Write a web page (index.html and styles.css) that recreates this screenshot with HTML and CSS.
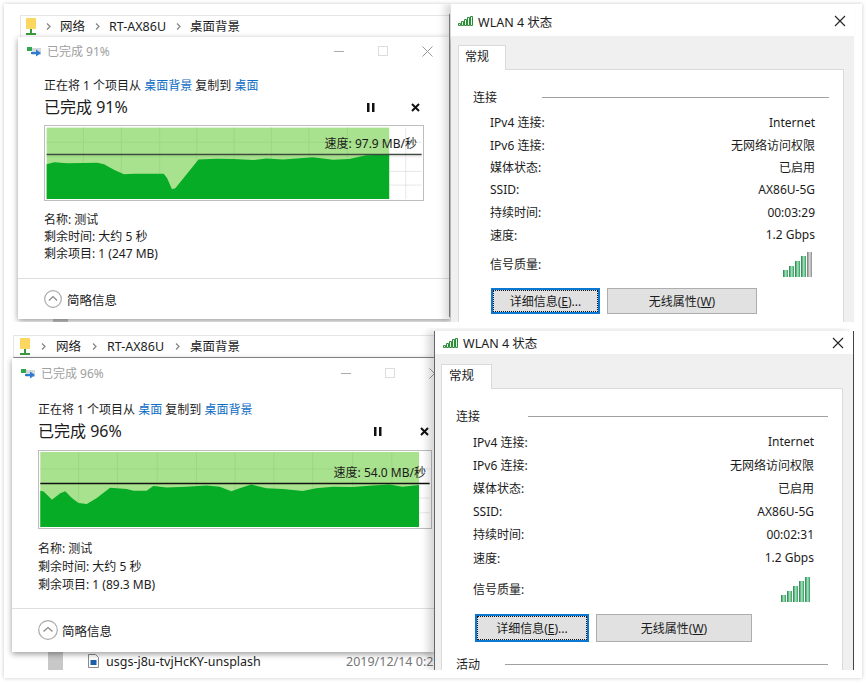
FILE: index.html
```html
<!DOCTYPE html>
<html lang="zh-CN">
<head>
<meta charset="utf-8">
<title>Transfer comparison</title>
<link rel="stylesheet" href="styles.css">
</head>
<body>
<main class="card">

<section class="shot shot-a">
  <div class="bg-block"></div>
  <nav class="crumb">
    <svg class="folder" width="10" height="17" viewBox="0 0 10 17"><rect x="0" y="0" width="10" height="11" rx="1" fill="#fbd75f"/><rect x="4" y="11" width="2" height="4" fill="#3c9a3c"/><rect x="0" y="15" width="10" height="2" fill="#3c9a3c"/></svg>
    <svg class="chev" width="5" height="7" viewBox="0 0 5 7"><path d="M1 0.5L4 3.5L1 6.5" fill="none" stroke="#888" stroke-width="1.3"/></svg>
    <span>网络</span>
    <svg class="chev" width="5" height="7" viewBox="0 0 5 7"><path d="M1 0.5L4 3.5L1 6.5" fill="none" stroke="#888" stroke-width="1.3"/></svg>
    <span>RT-AX86U</span>
    <svg class="chev" width="5" height="7" viewBox="0 0 5 7"><path d="M1 0.5L4 3.5L1 6.5" fill="none" stroke="#888" stroke-width="1.3"/></svg>
    <span>桌面背景</span>
  </nav>

  <div class="dialog">
    <header class="dlg-title">
      <svg class="copy-icon" width="15" height="11" viewBox="0 0 15 11"><rect x="0" y="1" width="5" height="4" fill="#2fa84f"/><rect x="5" y="2" width="9" height="7" fill="#d5d9de"/><path d="M4 6H9V3.5L14 7L9 10.5V8H4Z" fill="#2b7cd3"/></svg>
      <span class="dlg-caption">已完成 91%</span>
      <div class="win-ctrls">
        <span class="win-btn"><svg width="10" height="10" viewBox="0 0 10 10"><path d="M0 5.5H10" stroke="#aaa"/></svg></span>
        <span class="win-btn"><svg width="10" height="10" viewBox="0 0 10 10"><rect x="0.5" y="0.5" width="9" height="9" fill="none" stroke="#ddd"/></svg></span>
        <span class="win-btn"><svg width="11" height="11" viewBox="0 0 11 11"><path d="M0.5 0.5L10.5 10.5M10.5 0.5L0.5 10.5" stroke="#999"/></svg></span>
      </div>
    </header>
    <div class="dlg-body">
      <p class="copy-line">正在将 1 个项目从 <a class="link">桌面背景</a> 复制到 <a class="link">桌面</a></p>
      <div class="progress-row">
        <h1 class="progress">已完成 91%</h1>
        <span class="ctl"><svg width="8" height="9" viewBox="0 0 8 9"><path d="M0 0H2.5V9H0ZM5 0H7.500V9H5Z" fill="#111"/></svg></span>
        <span class="ctl"><svg width="9" height="9" viewBox="0 0 9 9"><path d="M1 1L8 8M8 1L1 8" stroke="#111" stroke-width="2"/></svg></span>
      </div>
      <div class="chart">
        <svg class="chart-svg" viewBox="132 30 1140 228" preserveAspectRatio="none">
          <rect x="132" y="30" width="1140" height="228" fill="#fff"/>
          <rect x="137" y="35" width="1033" height="220" fill="#a9e28f"/>
          <path d="M248 35V255M362 35V255M478 35V255M590 35V255M702 35V255M815 35V255M928 35V255M1044 35V255M137 80H1170M137 125H1170" stroke="#96d17c" stroke-width="2"/>
          <path d="M1170 80H1268M1170 125H1268M1170 170H1268M1170 212H1268M1220 35V255" stroke="#dcdcdc" stroke-width="2"/>
          <polygon points="137,148 160,142 200,145 290,143 310,148 340,165 370,179 400,177 490,177 500,190 515,225 525,222 550,190 595,133 650,131 700,132 760,135 800,130 850,133 940,126 1000,134 1050,132 1100,120 1170,118 1170,255 137,255" fill="#06ab26"/>
          <path d="M137 118H1268" stroke="#3c4a3c" stroke-width="5"/>
        </svg>
        <span class="speed">速度: 97.9 MB/秒</span>
      </div>
      <ul class="details">
        <li>名称: 测试</li>
        <li>剩余时间: 大约 5 秒</li>
        <li>剩余项目: 1 (247 MB)</li>
      </ul>
    </div>
    <footer class="dlg-foot">
      <svg width="18" height="18" viewBox="0 0 18 18"><circle cx="9" cy="9" r="8.300" fill="none" stroke="#aaa" stroke-width="1.200"/><path d="M5 10.500L9 6.500L13 10.500" fill="none" stroke="#888" stroke-width="1.200"/></svg>
      <span>简略信息</span>
    </footer>
  </div>

  <div class="wlan">
    <header class="wlan-title">
      <svg width="15" height="10" viewBox="0 0 15 10"><path d="M0.500 7.500h2v2h-2zM3.500 5.500h2v4h-2zM6.500 3.500h2v6h-2zM9.500 1.500h2v8h-2zM12.500 0.500h2v9h-2z" fill="#e5f5e5" stroke="#2e8b3a"/></svg>
      <span>WLAN 4 状态</span>
      <svg class="wlan-close" width="12" height="12" viewBox="0 0 12 12"><path d="M1 1L11 11M11 1L1 11" stroke="#222" stroke-width="1.100"/></svg>
    </header>
    <div class="band">
      <div class="tab">常规</div>
      <div class="panel">
        <div class="group-head"><span class="group-label">连接</span><span class="group-line"></span></div>
        <dl class="rows">
          <div class="row"><dt>IPv4 连接:</dt><dd>Internet</dd></div>
          <div class="row"><dt>IPv6 连接:</dt><dd>无网络访问权限</dd></div>
          <div class="row"><dt>媒体状态:</dt><dd>已启用</dd></div>
          <div class="row"><dt>SSID:</dt><dd>AX86U-5G</dd></div>
          <div class="row"><dt>持续时间:</dt><dd>00:03:29</dd></div>
          <div class="row"><dt>速度:</dt><dd>1.2 Gbps</dd></div>
          <div class="row row-signal"><dt>信号质量:</dt>
            <dd><svg class="signal" width="29" height="25" viewBox="0 0 29 25">
              <defs>
                <linearGradient id="g" x1="0" y1="0" x2="1" y2="0"><stop offset="0" stop-color="#1f7f4a"/><stop offset=".55" stop-color="#a7e6bd"/><stop offset="1" stop-color="#2f9a5c"/></linearGradient>
                <linearGradient id="n" x1="0" y1="0" x2="1" y2="0"><stop offset="0" stop-color="#777"/><stop offset=".55" stop-color="#ddd"/><stop offset="1" stop-color="#888"/></linearGradient>
              </defs>
              <rect x="0" y="18" width="5" height="7" fill="url(#g)"/><rect x="6" y="14" width="5" height="11" fill="url(#g)"/><rect x="12" y="9" width="5" height="16" fill="url(#g)"/><rect x="18" y="4" width="5" height="21" fill="url(#g)"/><rect x="24" y="0" width="5" height="25" fill="url(#n)"/>
            </svg></dd></div>
        </dl>
        <div class="btns">
          <span class="btn btn-focus">详细信息(<u>E</u>)...</span>
          <span class="btn btn-plain">无线属性(<u>W</u>)</span>
        </div>
      </div>
    </div>
  </div>
</section>

<section class="shot shot-b">
  <div class="filerow">
    <span class="file-block"></span>
    <svg class="file-icon" width="11" height="14" viewBox="0 0 11 14"><path d="M0.500 0.500H7.500L10.500 3.500V13.500H0.500Z" fill="#fff" stroke="#8a8a8a"/><rect x="2.500" y="6" width="6" height="5" fill="#1c5fa8"/></svg>
    <span class="file-name">usgs-j8u-tvjHcKY-unsplash</span>
    <span class="file-date">2019/12/14 0:21</span>
  </div>
  <nav class="crumb">
    <svg class="folder" width="10" height="17" viewBox="0 0 10 17"><rect x="0" y="0" width="10" height="11" rx="1" fill="#fbd75f"/><rect x="4" y="11" width="2" height="4" fill="#3c9a3c"/><rect x="0" y="15" width="10" height="2" fill="#3c9a3c"/></svg>
    <svg class="chev" width="5" height="7" viewBox="0 0 5 7"><path d="M1 0.500L4 3.500L1 6.500" fill="none" stroke="#888" stroke-width="1.300"/></svg>
    <span>网络</span>
    <svg class="chev" width="5" height="7" viewBox="0 0 5 7"><path d="M1 0.500L4 3.500L1 6.500" fill="none" stroke="#888" stroke-width="1.300"/></svg>
    <span>RT-AX86U</span>
    <svg class="chev" width="5" height="7" viewBox="0 0 5 7"><path d="M1 0.500L4 3.500L1 6.500" fill="none" stroke="#888" stroke-width="1.300"/></svg>
    <span>桌面背景</span>
  </nav>

  <div class="dialog">
    <header class="dlg-title">
      <svg class="copy-icon" width="15" height="11" viewBox="0 0 15 11"><rect x="0" y="1" width="5" height="4" fill="#2fa84f"/><rect x="5" y="2" width="9" height="7" fill="#d5d9de"/><path d="M4 6H9V3.500L14 7L9 10.500V8H4Z" fill="#2b7cd3"/></svg>
      <span class="dlg-caption">已完成 96%</span>
      <div class="win-ctrls">
        <span class="win-btn"><svg width="10" height="10" viewBox="0 0 10 10"><path d="M0 5.500H10" stroke="#aaa"/></svg></span>
        <span class="win-btn"><svg width="10" height="10" viewBox="0 0 10 10"><rect x="0.500" y="0.500" width="9" height="9" fill="none" stroke="#ddd"/></svg></span>
        <span class="win-btn"><svg width="11" height="11" viewBox="0 0 11 11"><path d="M0.500 0.500L10.500 10.500M10.500 0.500L0.500 10.500" stroke="#999"/></svg></span>
      </div>
    </header>
    <div class="dlg-body">
      <p class="copy-line">正在将 1 个项目从 <a class="link">桌面</a> 复制到 <a class="link">桌面背景</a></p>
      <div class="progress-row">
        <h1 class="progress">已完成 96%</h1>
        <span class="ctl"><svg width="8" height="9" viewBox="0 0 8 9"><path d="M0 0H2.500V9H0ZM5 0H7.500V9H5Z" fill="#111"/></svg></span>
        <span class="ctl"><svg width="9" height="9" viewBox="0 0 9 9"><path d="M1 1L8 8M8 1L1 8" stroke="#111" stroke-width="2"/></svg></span>
      </div>
      <div class="chart">
        <svg class="chart-svg" viewBox="116 0 1180 237" preserveAspectRatio="none">
          <rect x="116" y="0" width="1180" height="237" fill="#fff"/>
          <rect x="120" y="3" width="1140" height="231" fill="#a9e28f"/>
          <path d="M235 3V234M352 3V234M472 3V234M590 3V234M706 3V234M823 3V234M940 3V234M1060 3V234M1178 3V234M120 55H1260" stroke="#96d17c" stroke-width="2"/>
          <path d="M1260 55H1292M1260 145H1292M1260 190H1292" stroke="#dcdcdc" stroke-width="2"/>
          <polygon points="120,122 130,125 155,150 180,130 195,124 215,145 235,160 260,163 290,145 330,113 380,117 400,122 440,122 460,108 500,112 560,110 620,106 660,110 695,124 720,115 755,103 800,115 850,117 910,123 950,115 1000,110 1060,111 1120,106 1170,103 1210,110 1260,105 1260,234 120,234" fill="#06ab26"/>
          <path d="M120 100H1292" stroke="#111" stroke-width="4"/>
        </svg>
        <span class="speed">速度: 54.0 MB/秒</span>
      </div>
      <ul class="details">
        <li>名称: 测试</li>
        <li>剩余时间: 大约 5 秒</li>
        <li>剩余项目: 1 (89.3 MB)</li>
      </ul>
    </div>
    <footer class="dlg-foot">
      <svg width="20" height="20" viewBox="0 0 20 20"><circle cx="10" cy="10" r="9.300" fill="none" stroke="#aaa" stroke-width="1.200"/><path d="M5.500 11.500L10 7.500L14.500 11.500" fill="none" stroke="#888" stroke-width="1.200"/></svg>
      <span>简略信息</span>
    </footer>
  </div>

  <div class="wlan">
    <header class="wlan-title">
      <svg width="15" height="10" viewBox="0 0 15 10"><path d="M0.500 7.500h2v2h-2zM3.500 5.500h2v4h-2zM6.500 3.500h2v6h-2zM9.500 1.500h2v8h-2zM12.500 0.500h2v9h-2z" fill="#e5f5e5" stroke="#2e8b3a"/></svg>
      <span>WLAN 4 状态</span>
      <svg class="wlan-close" width="12" height="12" viewBox="0 0 12 12"><path d="M1 1L11 11M11 1L1 11" stroke="#222" stroke-width="1.100"/></svg>
    </header>
    <div class="band">
      <div class="tab">常规</div>
      <div class="panel">
        <div class="group-head"><span class="group-label">连接</span><span class="group-line"></span></div>
        <dl class="rows">
          <div class="row"><dt>IPv4 连接:</dt><dd>Internet</dd></div>
          <div class="row"><dt>IPv6 连接:</dt><dd>无网络访问权限</dd></div>
          <div class="row"><dt>媒体状态:</dt><dd>已启用</dd></div>
          <div class="row"><dt>SSID:</dt><dd>AX86U-5G</dd></div>
          <div class="row"><dt>持续时间:</dt><dd>00:02:31</dd></div>
          <div class="row"><dt>速度:</dt><dd>1.2 Gbps</dd></div>
          <div class="row row-signal"><dt>信号质量:</dt>
            <dd><svg class="signal" width="29" height="25" viewBox="0 0 29 25">
              <rect x="0" y="18" width="5" height="7" fill="url(#g)"/><rect x="6" y="14" width="5" height="11" fill="url(#g)"/><rect x="12" y="9" width="5" height="16" fill="url(#g)"/><rect x="18" y="4" width="5" height="21" fill="url(#g)"/><rect x="24" y="0" width="5" height="25" fill="url(#g)"/>
            </svg></dd></div>
        </dl>
        <div class="btns">
          <span class="btn btn-focus">详细信息(<u>E</u>)...</span>
          <span class="btn btn-plain">无线属性(<u>W</u>)</span>
        </div>
        <div class="group-head group-next"><span class="group-label">活动</span><span class="group-line"></span></div>
      </div>
    </div>
  </div>
</section>

</main>
</body>
</html>
```
FILE: styles.css
```css
* { box-sizing: border-box; }
html, body { height: 100%; }
body {
  margin: 0;
  padding: 4px;
  overflow: hidden;
  background: #fff;
  color: #1c1c1c;
  font-family: "Noto Sans", "Noto Sans CJK SC", sans-serif;
  font-size: 12px;
}
p, h1, ul, dl, dd { margin: 0; padding: 0; }
ul { list-style: none; }

.card {
  width: 858px;
  height: 674px;
  background: #fff;
  box-shadow: 0 0 4px rgba(0, 0, 0, 0.22);
  display: flex;
  flex-direction: column;
}

.shot { position: relative; overflow: hidden; width: 858px; flex: none; }
.shot-a { height: 318px; }
.shot-b { height: 342px; margin-top: 6px; }

/* windows on the screenshot's desktop */
.crumb, .dialog, .wlan, .filerow, .bg-block { position: absolute; }

.crumb {
  display: flex;
  align-items: center;
  background: #fff;
  border-bottom: 1px solid #8c8c8c;
  border-top: 1px solid #e6e6e6;
  border-left: 1px solid #e6e6e6;
}
.crumb span { font-size: 12.5px; line-height: 16px; white-space: nowrap; }
.shot-a .crumb { left: 16px; top: 11px; width: 430px; height: 23px; padding-left: 5px; gap: 9.500px; }
.shot-b .crumb { left: 9px; top: 7px; width: 421px; height: 23px; padding-left: 6px; gap: 10.500px; }

.bg-block { left: 49px; top: 315px; width: 15px; height: 3px; background: #c8c8c8; }

.dialog {
  display: flex;
  flex-direction: column;
  background: #fff;
  box-shadow: 0 2px 6px rgba(0, 0, 0, 0.4);
}
.shot-a .dialog { left: 14px; top: 33px; width: 432px; height: 282px; }
.shot-b .dialog { left: 8px; top: 30px; width: 422px; height: 294px; }

.dlg-title { display: flex; align-items: center; flex: none; }
.shot-a .dlg-title { height: 28px; padding-left: 9px; }
.shot-b .dlg-title { height: 30px; padding-left: 9px; }
.copy-icon { margin-right: 5px; flex: none; }
.dlg-caption { color: #a0a0a0; font-size: 12px; }
.win-ctrls { display: flex; margin-left: auto; }
.shot-a .win-ctrls { margin-right: 1px; }
.shot-b .win-ctrls { margin-right: -22px; }
.win-btn { width: 44px; display: flex; justify-content: center; align-items: center; }

.dlg-body { padding-left: 26px; flex: none; }
.copy-line { line-height: 18px; white-space: nowrap; }
.shot-a .copy-line { margin-top: 12px; }
.shot-b .copy-line { margin-top: 13px; }
.link { color: #0d6cc4; }

.progress-row { display: flex; align-items: center; height: 24px; }
.progress { font-size: 16px; font-weight: 400; line-height: 24px; margin-right: auto; white-space: nowrap; }
.ctl { display: flex; justify-content: center; align-items: center; }
.shot-a .progress-row { width: 393px; }
.shot-a .ctl { width: 44px; }
.shot-b .progress-row { width: 410px; }
.shot-b .ctl { width: 47px; }

.chart { position: relative; }
.shot-a .chart { width: 380px; height: 76px; margin-top: 6px; }
.shot-b .chart { width: 394px; height: 79px; margin-top: 7px; }
.chart-svg { display: block; width: 100%; height: 100%; border: 1px solid #bdbdbd; }
.speed { position: absolute; font-size: 12px; line-height: 16px; white-space: nowrap; color: #1a1a1a; }
.shot-a .speed { top: 11px; right: 7px; }
.shot-b .speed { top: 15px; right: 6px; }

.shot-a .details { margin-top: 10px; line-height: 17px; }
.shot-b .details { margin-top: 11px; line-height: 18px; }

.dlg-foot {
  display: flex;
  align-items: center;
  gap: 5px;
  padding-left: 26px;
  border-top: 1px solid #dfdfdf;
  flex: none;
  font-size: 12.5px;
}
.shot-a .dlg-foot { margin-top: 16px; height: 41px; gap: 5px; }
.shot-b .dlg-foot { margin-top: 14px; height: 43px; gap: 4px; }

.filerow { left: 44px; top: 324px; height: 18px; width: 386px; display: flex; align-items: center; }
.file-block { width: 15px; height: 18px; background: #c8c8c8; margin-right: 25px; }
.file-icon { margin-right: 7px; }
.file-name { font-size: 12.5px; white-space: nowrap; }
.file-date { margin-left: auto; color: #777; font-size: 12.5px; white-space: nowrap; width: 88px; overflow: hidden; }

.wlan {
  display: flex;
  flex-direction: column;
  background: #fff;
  box-shadow: -6px 0 8px rgba(0, 0, 0, 0.16);
}
.shot-a .wlan { left: 447px; top: 0; width: 403px; height: 318px; }
.shot-b .wlan {
  left: 430px; top: 3px; width: 420px; height: 339px;
  border-left: 1px solid #666;
  border-right: 1px solid #444;
}
.shot-a .wlan::before {
  content: "";
  position: absolute;
  left: -2px; top: 10px; bottom: 5px;
  border-left: 1px solid #777;
}

.wlan-title { display: flex; align-items: center; gap: 5px; flex: none; font-size: 12.5px; padding-left: 7px; padding-right: 8px; }
.shot-a .wlan-title { height: 32px; padding-top: 2px; }
.shot-b .wlan-title { height: 23px; padding-left: 8px; padding-right: 9px; }
.wlan-close { margin-left: auto; flex: none; }

.band { flex: 1; background: #f0f0f0; padding: 9px 10px 0 7px; min-height: 0; overflow: hidden; }
.shot-b .band { padding-top: 10px; padding-left: 6px; }
.tab {
  position: relative;
  z-index: 1;
  width: 48px;
  height: 25px;
  margin-bottom: -1px;
  background: #fff;
  border: 1px solid #dadada;
  border-bottom: 0;
  padding-left: 6px;
  line-height: 22px;
}
.shot-b .tab { width: 51px; padding-left: 7px; font-size: 12.5px; }
.panel { background: #fff; border: 1px solid #dadada; border-bottom: 0; height: 400px; padding: 18px 14px 0; }

.group-head { display: flex; align-items: center; height: 18px; }
.group-label { flex: none; width: 69px; }
.shot-b .group-label { width: 72px; }
.group-line { flex: 1; border-top: 1px solid #a0a0a0; }
.group-next { margin-top: 13px; }
.group-next .group-label { width: 49px; }

.rows { margin-top: 5px; padding: 0 14px 0 17px; }
.row { display: flex; justify-content: space-between; align-items: center; height: 22.500px; }
.shot-b .row { height: 23.200px; }
.row-signal, .shot-b .row-signal { height: 36px; }
.shot-b .row-signal { height: 40px; }
.signal { display: block; margin-right: 3px; }
.shot-b .signal { margin-right: 4px; }

.btns { display: flex; gap: 7px; margin-left: 18px; }
.shot-a .btns { margin-top: 6px; }
.shot-b .btns { margin-top: 5px; margin-left: 19px; }
.btn { display: flex; align-items: center; justify-content: center; background: #e1e1e1; white-space: nowrap; }
.shot-a .btn { height: 26px; }
.shot-b .btn { height: 28px; }
.btn-focus { border: 2px solid #0a78d2; outline: 1px dotted #111; outline-offset: -3px; }
.btn-plain { border: 1px solid #adadad; }
.shot-a .btn-focus { width: 109px; }
.shot-a .btn-plain { width: 150px; }
.shot-b .btn-focus { width: 114px; }
.shot-b .btn-plain { width: 156px; }
```
